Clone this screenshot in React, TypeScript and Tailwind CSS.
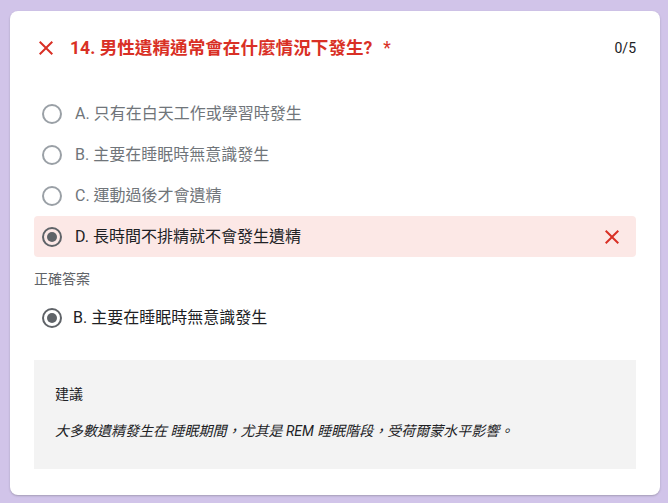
import React from "react";

const font = { fontFamily: "Roboto, 'Noto Sans CJK TC', sans-serif" };

const CloseIcon = ({ className }: { className?: string }) => (
  <svg viewBox="0 0 24 24" className={className} fill="currentColor">
    <path d="M19 6.41 17.59 5 12 10.59 6.41 5 5 6.41 10.59 12 5 17.59 6.41 19 12 13.41 17.59 19 19 17.59 13.41 12z" />
  </svg>
);

const Radio = ({ checked }: { checked?: boolean }) => (
  <div
    className={
      checked
        ? "w-5 h-5 rounded-full border-2 border-[#5f6368] flex items-center justify-center shrink-0"
        : "w-5 h-5 rounded-full border-2 border-[#9aa0a6] shrink-0"
    }
  >
    {checked && <div className="w-[10px] h-[10px] rounded-full bg-[#5f6368]" />}
  </div>
);

const options = [
  { label: "A. 只有在白天工作或學習時發生" },
  { label: "B. 主要在睡眠時無意識發生" },
  { label: "C. 運動過後才會遺精" },
  { label: "D. 長時間不排精就不會發生遺精", picked: true },
];

export default function App() {
  return (
    <div className="w-[668px] h-[503px] bg-[#d1c4e9] pt-[11px] pl-[10px] pr-[8px]" style={font}>
      <div className="h-[484px] bg-white rounded-lg shadow-[0_1px_2px_rgba(60,64,67,0.3)] p-6">
        <div className="flex items-center h-[26px]">
          <CloseIcon className="w-6 h-6 text-[#d93025] shrink-0" />
          <div className="ml-3 text-[17.6px] font-bold text-[#d93025] leading-[26px]">
            14. 男性遺精通常會在什麼情況下發生?
            <span className="ml-[11px] font-normal">*</span>
          </div>
          <div className="ml-auto text-sm text-[#202124]">0/5</div>
        </div>

        <div className="mt-8 flex flex-col">
          {options.map((o) => (
            <div
              key={o.label}
              className={
                o.picked
                  ? "h-[41px] flex items-center pl-2 pr-[12px] rounded bg-[#fce8e6]"
                  : "h-[41px] flex items-center pl-2 pr-[12px]"
              }
            >
              <Radio checked={o.picked} />
              <span
                className={
                  o.picked
                    ? "ml-[13px] text-base text-[#202124]"
                    : "ml-[13px] text-base text-[#70757a]"
                }
              >
                {o.label}
              </span>
              {o.picked && <CloseIcon className="ml-auto w-6 h-6 text-[#d93025]" />}
            </div>
          ))}
        </div>

        <div className="mt-3 text-sm leading-5 text-[#5f6368]">正確答案</div>
        <div className="mt-2 h-[41px] flex items-center pl-2">
          <Radio checked />
          <span className="ml-[11px] text-base text-[#202124]">B. 主要在睡眠時無意識發生</span>
        </div>

        <div className="mt-[22px] bg-[#f3f3f3] pt-6 pb-7 px-[21px]">
          <div className="text-sm leading-5 text-[#202124]">建議</div>
          <div className="mt-[17px] text-sm leading-5 italic text-[#202124]">
            大多數遺精發生在 睡眠期間，尤其是 REM 睡眠階段，受荷爾蒙水平影響。
          </div>
        </div>
      </div>
    </div>
  );
}
